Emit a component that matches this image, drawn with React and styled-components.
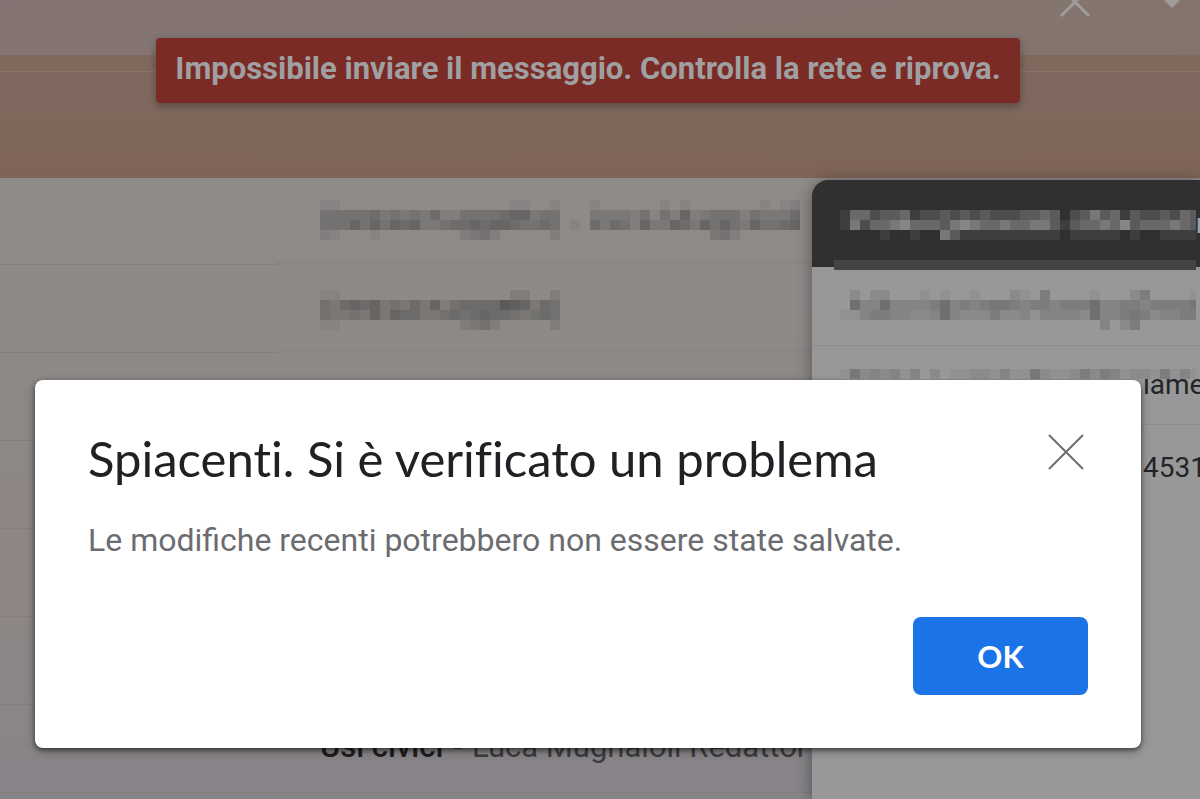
import React from "react";
import styled, { createGlobalStyle } from "styled-components";

const GlobalStyle = createGlobalStyle`
  *, *::before, *::after { box-sizing: border-box; }
  body { margin: 0; background: #8a8687; font-family: Roboto, "Liberation Sans", sans-serif; }
`;

const Page = styled.div`
  position: relative;
  min-height: 100vh;
  overflow: hidden;
  display: flex;
  flex-direction: column;
`;

const Toolbar = styled.header`
  display: flex;
  justify-content: flex-end;
  gap: 70px;
  height: 55px;
  padding-right: 18px;
  background: linear-gradient(170deg, #847574, #84756f 70%, #82736c);
`;

const Banner = styled.div`
  height: 123px;
  background: linear-gradient(#7f685c, #7f685d 40%, #7f6458);
  padding-top: 16px;
`;

const BannerRule = styled.div`
  height: 1px;
  background: #8a7368;
`;

const MailList = styled.ul`
  flex: 1;
  margin: 0;
  padding: 0;
  list-style: none;
  background: linear-gradient(#8f8b89, #8d8987 30%, #8e8683 65%, #8b8688 80%, #878489);
`;

const MailRow = styled.li`
  display: flex;
  height: ${(p) => (p.$first ? "87px" : "88px")};
  overflow: hidden;
`;

const Sender = styled.div`
  flex: 0 0 276px;
  border-bottom: 1px solid #827f7f;
`;

const Subject = styled.div`
  flex: 1;
  display: flex;
  align-items: flex-start;
  gap: 10px;
  padding: ${(p) => p.$top || 0}px 0 0 44px;
  white-space: nowrap;
  border-bottom: ${(p) => (p.$banded ? "4px solid #8a8684" : "1px solid #7f7d7f")};
  font-size: 31px;
  line-height: 38px;
  color: #3d3d40;

  strong { font-weight: 500; color: #1f1f21; }
`;

const Compose = styled.section`
  position: absolute;
  top: 180px;
  right: 0;
  bottom: 0;
  width: 388px;
  overflow: hidden;
  border-radius: 16px 0 0 0;
  background: #98989a;
  box-shadow: 0 2px 16px rgba(0, 0, 0, 0.4);
`;

const ComposeBar = styled.div`
  display: flex;
  align-items: flex-start;
  height: 87px;
  padding: 30px 0 0 28px;
  background: #303031;
  color: #a0a0a2;
  font-size: 28px;
  font-weight: 500;
  line-height: 28px;
`;

const CensorStrip = styled.div`
  position: absolute;
  top: 80px;
  left: 22px;
  right: 4px;
  height: 10px;
  background: #444446;
`;

const ComposeField = styled.div`
  display: grid;
  align-items: start;
  height: 79px;
  padding: 23px 0 0 28px;
  border-bottom: 1px solid #8b8c8e;
  white-space: nowrap;

  > * { grid-area: 1 / 1; }
`;

const FieldText = styled.span`
  padding-left: 303px;
  font-size: 28px;
  line-height: 32px;
  color: #242426;
`;

const ComposeBody = styled.div`
  padding: 27px 0 0 331px;
  white-space: nowrap;
  font-size: 28px;
  line-height: 32px;
  color: #242426;
`;

const Overlay = styled.div`
  position: absolute;
  inset: 0;
  display: flex;
  flex-direction: column;
  align-items: center;
  padding: 38px 59px 0 35px;
`;

const Toast = styled.div`
  display: flex;
  align-items: flex-start;
  height: 65px;
  padding: 12px 19px 0;
  border-radius: 4px;
  background: #7b2b25;
  box-shadow: 0 3px 8px rgba(0, 0, 0, 0.3);
  color: #a0a0a2;
  font-size: 31px;
  font-weight: 700;
  line-height: 38px;
  white-space: nowrap;
`;

const Dialog = styled.section`
  align-self: stretch;
  margin-top: 277px;
  padding: 48px 53px 53px;
  border-radius: 8px;
  background: #fff;
  box-shadow: 0 2px 5px rgba(0, 0, 0, 0.55), 0 4px 12px rgba(0, 0, 0, 0.2);
`;

const DialogHead = styled.div`
  display: flex;
  justify-content: space-between;
  align-items: flex-start;
`;

const Title = styled.h1`
  margin: 0;
  font-family: Lato, "Liberation Sans", sans-serif;
  font-size: 49px;
  font-weight: 400;
  line-height: 60px;
  font-variant-ligatures: none;
  color: #202124;
  white-space: nowrap;
`;

const CloseButton = styled.button`
  display: flex;
  padding: 4px;
  margin-top: 2px;
  border: 0;
  background: none;
  cursor: pointer;
`;

const Message = styled.p`
  margin: 33px 0 0;
  font-size: 32px;
  line-height: 38px;
  color: #6a6c70;
`;

const Actions = styled.div`
  display: flex;
  justify-content: flex-end;
  margin-top: 58px;
`;

const OkButton = styled.button`
  width: 175px;
  height: 78px;
  border: 0;
  border-radius: 8px;
  background: #1b73e8;
  color: #fff;
  font-family: Lato, "Liberation Sans", sans-serif;
  font-size: 31px;
  font-weight: 700;
  cursor: pointer;
`;

const Block = styled.svg`
  display: block;
  flex: none;
`;

const Cover = styled.div`
  position: relative;
  z-index: 1;
`;

const CELL = 10;

// Each digit is the strength of one tile of a pixelated line of text.
function Mosaic({ rows, width, tone, step, backing }) {
  const full = rows[0].length * CELL;
  return (
    <Block width={width || full} height={rows.length * CELL} shapeRendering="crispEdges" aria-hidden="true">
      {backing && <rect width={full} height={rows.length * CELL} fill={backing} />}
      {rows.map((row, y) =>
        [...row].map((level, x) =>
          level === "0" ? null : (
            <rect key={`${x}-${y}`} x={x * CELL} y={y * CELL} width={CELL} height={CELL} fill={tone} fillOpacity={level * step} />
          )
        )
      )}
    </Block>
  );
}

const SUBJECT_ONE = [
  "110000000000000000011001000100000010100000001012",
  "444445343435224444566344000333324142623444243335",
  "444646465633455656654454010535426336536464364456",
  "210001000000002342000002000000000000000342000000",
];
const SUBJECT_TWO = [
  "110000000000000000022002",
  "435656343536245555876354",
  "433436365533454565543454",
  "110000000000002342000002",
];
const COMPOSE_TITLE = [
  "144233412232323222334302353413223243",
  "152445644435654454455313445463444543",
  "000010010053111111111101111101001111",
];
const RECIPIENT = [
  "020220001010010002104000010002400001",
  "063363333463434554344344463344344445",
  "113443322363222422313333263345423344",
  "000000000000000000000000003024000000",
];
const COMPOSE_SUBJECT = ["152323130201122131152112424312214131"];

export default function App() {
  return (
    <>
      <GlobalStyle />
      <Page>
        <Toolbar aria-hidden="true">
          <Block width="34" height="20" viewBox="0 0 34 20">
            <path d="M3 16 L21 -2 M31 16 L13 -2" fill="none" stroke="#a09c9a" strokeWidth="3" />
          </Block>
          <Block width="20" height="20" viewBox="0 0 20 20">
            <path d="M0 -2 H20 L10 8 Z" fill="#a09c9a" />
          </Block>
        </Toolbar>
        <Banner>
          <BannerRule />
        </Banner>
        <MailList>
          <MailRow $first>
            <Sender />
            <Subject $banded $top={22}>
              <Mosaic rows={SUBJECT_ONE} tone="#101214" step={0.05} />
            </Subject>
          </MailRow>
          <MailRow>
            <Sender />
            <Subject $banded $top={25}>
              <Mosaic rows={SUBJECT_TWO} tone="#101214" step={0.05} />
            </Subject>
          </MailRow>
          {[0, 1, 2, 3].map((i) => (
            <MailRow key={i}>
              <Sender />
              <Subject />
            </MailRow>
          ))}
          <MailRow>
            <Sender />
            <Subject $top={23}>
              <strong>Usi civici</strong>
              <span>-</span>
              <span>Luca Mugnaioli Redattor</span>
            </Subject>
          </MailRow>
        </MailList>

        <Compose>
          <ComposeBar>
            <Mosaic rows={COMPOSE_TITLE} width={356} tone="#fff" step={0.07} />
            <span>n</span>
          </ComposeBar>
          <CensorStrip />
          <ComposeField>
            <Mosaic rows={RECIPIENT} width={356} tone="#101214" step={0.05} />
          </ComposeField>
          <ComposeField>
            <FieldText>lame</FieldText>
            <Cover>
              <Mosaic rows={COMPOSE_SUBJECT} width={356} tone="#101214" step={0.05} backing="#98989a" />
            </Cover>
          </ComposeField>
          <ComposeBody>4531</ComposeBody>
        </Compose>

        <Overlay>
          <Toast role="alert">Impossibile inviare il messaggio. Controlla la rete e riprova.</Toast>
          <Dialog role="alertdialog" aria-labelledby="title" aria-describedby="message">
            <DialogHead>
              <Title id="title">Spiacenti. Si è verificato un problema</Title>
              <CloseButton type="button" aria-label="Chiudi">
                <Block width="36" height="36" viewBox="0 0 36 36">
                  <path d="M1 1 L35 35 M35 1 L1 35" stroke="#6d6d6d" strokeWidth="2" />
                </Block>
              </CloseButton>
            </DialogHead>
            <Message id="message">Le modifiche recenti potrebbero non essere state salvate.</Message>
            <Actions>
              <OkButton type="button">OK</OkButton>
            </Actions>
          </Dialog>
        </Overlay>
      </Page>
    </>
  );
}
